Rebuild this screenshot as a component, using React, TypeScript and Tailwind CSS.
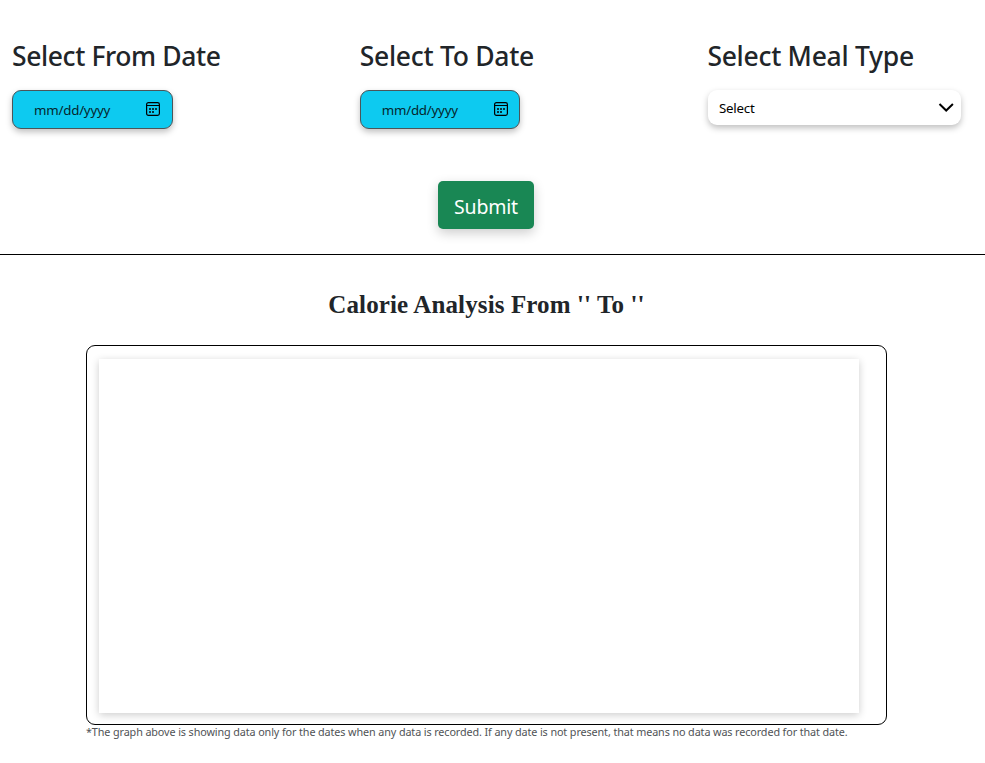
import type { ReactNode } from "react";

function CalendarIcon() {
  return (
    <svg width="14" height="14" viewBox="0 0 14 14" fill="none" className="mb-px shrink-0">
      <rect x="0.6" y="0.6" width="12.8" height="12.8" rx="1.8" stroke="#000" strokeWidth="1.2" />
      <path d="M1 3.5H13" stroke="#000" strokeWidth="1" />
      <path d="M3 6h2v2H3zM6 6h2v2H6zM9 6h2v2H9zM3 9h2v2H3zM6 9h2v2H6z" fill="#06333c" />
    </svg>
  );
}

function Field({ label, tracking, children }: { label: string; tracking: string; children: ReactNode }) {
  return (
    <div className="w-[347.7px] shrink-0 pl-3">
      <h3 className={`mb-[17px] h-[34px] whitespace-nowrap text-[26.5px] font-medium leading-[34px] text-[#212529] ${tracking}`}>
        {label}
      </h3>
      {children}
    </div>
  );
}

function DateInput() {
  return (
    <div className="flex h-[39px] w-[160.5px] items-center justify-between rounded-[9px] border border-[#4b5559] bg-[#0dcaf0] pl-[21px] pr-[11.5px] shadow-[0_3px_6px_rgba(0,0,0,0.25)]">
      <span className="pt-[3px] text-[13.333px] tracking-[-0.23px] text-[#06262d]">mm/dd/yyyy</span>
      <CalendarIcon />
    </div>
  );
}

export default function App() {
  return (
    <main className="h-[763px] w-[985px] overflow-hidden bg-white font-['Noto_Sans',sans-serif]">
      <section className="flex h-[181px] pt-[39px]">
        <Field label="Select From Date" tracking="tracking-[-0.4px]">
          <DateInput />
        </Field>
        <Field label="Select To Date" tracking="tracking-[-0.28px]">
          <DateInput />
        </Field>
        <Field label="Select Meal Type" tracking="tracking-[-0.28px]">
          <div className="ml-[0.6px] flex h-[35px] w-[253px] items-center justify-between rounded-[9px] bg-white pl-[11px] pr-[7px] shadow-[0_3px_6px_rgba(0,0,0,0.25)]">
            <span className="pt-0.5 text-[13.333px] tracking-[-0.25px] text-black">Select</span>
            <svg width="16" height="10" viewBox="0 0 16 10" fill="none">
              <path d="M1.5 1L8.2 7.5L14.9 1" stroke="#000" strokeWidth="2" />
            </svg>
          </div>
        </Field>
      </section>
      <div className="flex h-[74px] w-[972px] justify-center">
        <button className="h-12 w-24 rounded-[5px] bg-[#198754] pt-1 text-[19.5px] tracking-[-0.2px] text-white shadow-[0_4px_12px_rgba(0,0,0,0.2)]">
          Submit
        </button>
      </div>
      <hr className="-mt-px border-0 border-t border-black" />
      <section className="w-[973px]">
        <h2 className="h-[90px] whitespace-nowrap pt-[34px] text-center font-['Liberation_Serif',serif] text-[25px] font-bold leading-8 tracking-[0.12px] text-[#212529]">
          Calorie Analysis From '' To ''
        </h2>
        <div className="ml-[86px] h-[380px] w-[801px] rounded-[9px] border border-black pl-3 pt-[13px]">
          <div className="h-[354px] w-[760px] bg-white shadow-[0_2px_8px_rgba(0,0,0,0.2)]" />
        </div>
        <p className="ml-[86px] whitespace-nowrap text-[10.8px] leading-[14px] tracking-[-0.108px] text-[#505356]">
          *The graph above is showing data only for the dates when any data is recorded. If any date is not present, that means no data was recorded for that date.
        </p>
      </section>
    </main>
  );
}
